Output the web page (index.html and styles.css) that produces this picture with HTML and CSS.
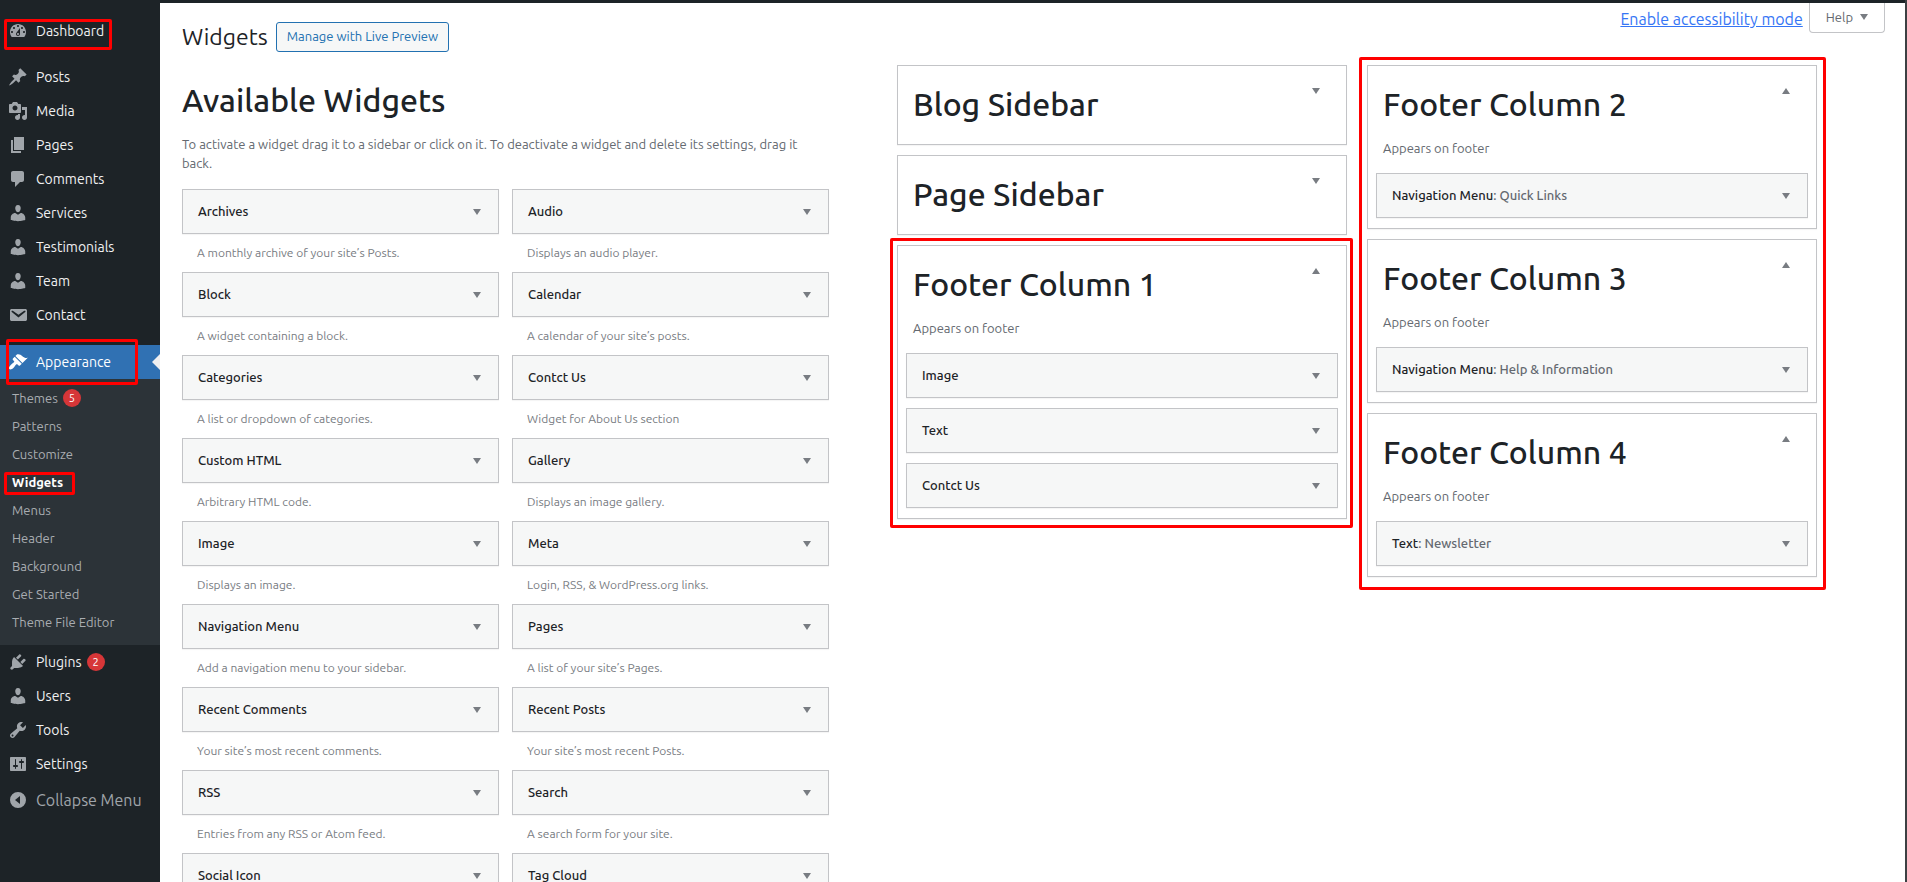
FILE: index.html
```html
<!DOCTYPE html>
<html lang="en">
<head>
    <meta charset="UTF-8">
    <meta name="viewport" content="width=device-width, initial-scale=1.0">
    <title>Widgets</title>
    <link rel="stylesheet" href="styles.css">
</head>
<body>
    <!-- Icons -->
    <svg class="sprite" aria-hidden="true">
        <symbol id="i-dashboard" viewBox="0 0 20 20"><path d="M3.76 16h12.48c1.1-1.37 1.76-3.11 1.76-5 0-4.42-3.58-8-8-8s-8 3.58-8 8c0 1.89.66 3.63 1.76 5zM10 4c.55 0 1 .45 1 1s-.45 1-1 1-1-.45-1-1 .45-1 1-1zM6 6c.55 0 1 .45 1 1s-.45 1-1 1-1-.45-1-1 .45-1 1-1zm8 0c.55 0 1 .45 1 1s-.45 1-1 1-1-.45-1-1 .45-1 1-1zm-5.37 5.55L12 7v6c0 1.1-.9 2-2 2s-2-.9-2-2c0-.57.24-1.08.63-1.45zM4 10c.55 0 1 .45 1 1s-.45 1-1 1-1-.45-1-1 .45-1 1-1zm12 0c.55 0 1 .45 1 1s-.45 1-1 1-1-.45-1-1 .45-1 1-1zm-5 3c0-.55-.45-1-1-1s-1 .45-1 1 .45 1 1 1 1-.45 1-1z"/></symbol>
        <symbol id="i-post" viewBox="0 0 20 20"><path d="M10.44 3.02l1.82-1.82 6.36 6.35-1.83 1.82c-1.05-.68-2.48-.57-3.41.36l-.75.75c-.92.93-1.04 2.35-.35 3.41l-1.83 1.82-2.41-2.41-2.8 2.79c-.42.42-3.38 2.71-3.8 2.29s1.86-3.39 2.28-3.81l2.79-2.79L4.1 9.36l1.83-1.82c1.05.69 2.48.57 3.4-.36l.75-.75c.93-.92 1.05-2.35.36-3.41z"/></symbol>
        <symbol id="i-media" viewBox="0 0 20 20"><path d="M13 11V4c0-.55-.45-1-1-1h-1.67L9 1H5L3.67 3H2c-.55 0-1 .45-1 1v7c0 .55.45 1 1 1h10c.55 0 1-.45 1-1zM7 4.5c1.38 0 2.5 1.12 2.5 2.5S8.38 9.5 7 9.5 4.5 8.38 4.5 7 5.62 4.5 7 4.5zM14 6h5v10.5c0 1.38-1.12 2.5-2.5 2.5S14 17.88 14 16.5s1.12-2.5 2.5-2.5c.17 0 .34.02.5.05V9h-3V6zm-4 8.05V13h2v3.5c0 1.38-1.12 2.5-2.5 2.5S7 17.88 7 16.5 8.12 14 9.5 14c.17 0 .34.02.5.05z"/></symbol>
        <symbol id="i-page" viewBox="0 0 20 20"><path d="M6 15V2h10v13H6zm-1 1h8v2H3V5h2v11z"/></symbol>
        <symbol id="i-comments" viewBox="0 0 20 20"><path d="M5 2h9c1.1 0 2 .9 2 2v7c0 1.1-.9 2-2 2h-2l-5 5v-5H5c-1.1 0-2-.9-2-2V4c0-1.1.9-2 2-2z"/></symbol>
        <symbol id="i-user" viewBox="0 0 20 20"><path d="M10 9.25c-2.27 0-2.73-3.44-2.73-3.44C7 4.02 7.82 2 9.97 2c2.16 0 2.98 2.02 2.71 3.81 0 0-.41 3.44-2.68 3.44zm0 2.57L12.72 10c2.39 0 4.52 2.33 4.52 4.53v2.49s-3.65 1.13-7.24 1.13c-3.65 0-7.24-1.13-7.24-1.13v-2.49c0-2.25 1.94-4.48 4.47-4.48z"/></symbol>
        <symbol id="i-email" viewBox="0 0 20 20"><path d="M3.87 4h13.25C18.37 4 19 4.59 19 5.79v8.42c0 1.19-.63 1.79-1.88 1.79H3.87c-1.25 0-1.88-.6-1.88-1.79V5.79c0-1.2.63-1.79 1.88-1.79zm6.62 8.6l6.74-5.53c.24-.2.43-.66.13-1.07-.29-.41-.82-.42-1.17-.17l-5.7 3.86L4.8 5.83c-.35-.25-.88-.24-1.17.17-.3.41-.11.87.13 1.07z"/></symbol>
        <symbol id="i-appearance" viewBox="0 0 20 20"><path d="M14.48 11.06L7.41 3.99l1.5-1.5c.5-.56 2.3-.47 3.51.32 1.21.8 1.43 1.28 2.91 2.1 1.18.64 2.45 1.26 4.45.85zm-.71.71L6.7 4.7 4.93 6.47c-.39.39-.39 1.02 0 1.41l1.06 1.06c.39.39.39 1.03 0 1.42-.6.6-1.43 1.11-2.21 1.69-.35.26-.7.53-1.01.84C1.43 14.23.4 16.08 1.4 17.07c.99 1 2.84-.03 4.18-1.36.31-.31.58-.66.85-1.02.57-.78 1.08-1.61 1.69-2.21.39-.39 1.02-.39 1.41 0l1.06 1.06c.39.39 1.02.39 1.41 0z"/></symbol>
        <symbol id="i-plugins" viewBox="0 0 20 20"><path d="M13.11 4.36L9.87 7.6 8 5.73l3.24-3.24c.35-.34 1.05-.2 1.56.32.52.51.66 1.21.31 1.55zm-8 1.77l.91-1.12 9.01 9.01-1.19.84c-.71.71-2.63 1.16-3.82 1.16H6.14L4.9 17.26c-.59.59-1.54.59-2.12 0-.59-.58-.59-1.53 0-2.12l1.24-1.24v-3.88c0-1.13.4-3.19 1.09-3.89zm7.26 3.97l3.24-3.24c.34-.35 1.04-.21 1.55.31.52.51.66 1.21.31 1.55l-3.24 3.25z"/></symbol>
        <symbol id="i-tools" viewBox="0 0 20 20"><path d="M16.68 9.77c-1.34 1.34-3.3 1.67-4.95.99l-5.41 6.52c-.99.99-2.59.99-3.58 0s-.99-2.59 0-3.57l6.52-5.42c-.68-1.65-.35-3.61.99-4.95 1.28-1.28 3.12-1.62 4.72-1.06l-2.89 2.89 2.82 2.82 2.86-2.87c.53 1.58.18 3.39-1.08 4.65zM3.81 16.21c.4.39 1.04.39 1.43 0 .4-.4.4-1.04 0-1.43-.39-.4-1.03-.4-1.43 0-.39.39-.39 1.03 0 1.43z"/></symbol>
        <symbol id="i-settings" viewBox="0 0 20 20"><path d="M18 16V4c0-.55-.45-1-1-1H3c-.55 0-1 .45-1 1v12c0 .55.45 1 1 1h14c.55 0 1-.45 1-1zM8 11h1c.55 0 1 .45 1 1s-.45 1-1 1H8v1.5c0 .28-.22.5-.5.5s-.5-.22-.5-.5V13H6c-.55 0-1-.45-1-1s.45-1 1-1h1V5.5c0-.28.22-.5.5-.5s.5.22.5.5V11zm5-2h-1c-.55 0-1-.45-1-1s.45-1 1-1h1V5.5c0-.28.22-.5.5-.5s.5.22.5.5V7h1c.55 0 1 .45 1 1s-.45 1-1 1h-1v5.5c0 .28-.22.5-.5.5s-.5-.22-.5-.5V9z"/></symbol>
        <symbol id="i-collapse" viewBox="0 0 20 20"><path fill-rule="evenodd" d="M10 2a8 8 0 1 0 0 16 8 8 0 0 0 0-16zM12 6v8l-5-4z"/></symbol>
        <symbol id="i-down" viewBox="0 0 8 6"><path d="M0 0h8L4 6z"/></symbol>
        <symbol id="i-up" viewBox="0 0 8 6"><path d="M0 6h8L4 0z"/></symbol>
    </svg>

    <div class="topbar"></div>

    <div class="layout">
        <!-- Admin menu -->
        <nav class="menu">
            <a href="#" class="menu-item marked mark-dashboard"><svg class="icon"><use href="#i-dashboard"/></svg>Dashboard</a>

            <div class="menu-group">
                <a href="#" class="menu-item"><svg class="icon"><use href="#i-post"/></svg>Posts</a>
                <a href="#" class="menu-item"><svg class="icon"><use href="#i-media"/></svg>Media</a>
                <a href="#" class="menu-item"><svg class="icon"><use href="#i-page"/></svg>Pages</a>
                <a href="#" class="menu-item"><svg class="icon"><use href="#i-comments"/></svg>Comments</a>
                <a href="#" class="menu-item"><svg class="icon"><use href="#i-user"/></svg>Services</a>
                <a href="#" class="menu-item"><svg class="icon"><use href="#i-user"/></svg>Testimonials</a>
                <a href="#" class="menu-item"><svg class="icon"><use href="#i-user"/></svg>Team</a>
                <a href="#" class="menu-item"><svg class="icon"><use href="#i-email"/></svg>Contact</a>
            </div>

            <a href="#" class="menu-item current marked mark-appearance"><svg class="icon"><use href="#i-appearance"/></svg>Appearance</a>
            <div class="submenu">
                <a href="#">Themes <span class="badge">5</span></a>
                <a href="#">Patterns</a>
                <a href="#">Customize</a>
                <a href="#" class="active marked mark-widgets">Widgets</a>
                <a href="#">Menus</a>
                <a href="#">Header</a>
                <a href="#">Background</a>
                <a href="#">Get Started</a>
                <a href="#">Theme File Editor</a>
            </div>

            <a href="#" class="menu-item"><svg class="icon"><use href="#i-plugins"/></svg>Plugins <span class="badge">2</span></a>
            <a href="#" class="menu-item"><svg class="icon"><use href="#i-user"/></svg>Users</a>
            <a href="#" class="menu-item"><svg class="icon"><use href="#i-tools"/></svg>Tools</a>
            <a href="#" class="menu-item"><svg class="icon"><use href="#i-settings"/></svg>Settings</a>
            <button type="button" class="collapse"><svg class="icon"><use href="#i-collapse"/></svg>Collapse Menu</button>
        </nav>

        <main class="content">
            <header class="page-header">
                <div class="page-title">
                    <h1>Widgets</h1>
                    <a href="#" class="title-action">Manage with Live Preview</a>
                </div>
                <div class="screen-meta">
                    <a href="#" class="access-link">Enable accessibility mode</a>
                    <button type="button" class="help">Help <svg class="arrow"><use href="#i-down"/></svg></button>
                </div>
            </header>

            <div class="columns">
                <!-- Available widgets -->
                <section class="available">
                    <h2>Available Widgets</h2>
                    <p class="intro">To activate a widget drag it to a sidebar or click on it. To deactivate a widget and delete its settings, drag it back.</p>

                    <div class="widget-list">
                        <div>
                            <div class="widget"><h3>Archives</h3><button type="button" class="toggle" aria-label="Add: Archives"><svg class="arrow"><use href="#i-down"/></svg></button></div>
                            <p class="desc">A monthly archive of your site’s Posts.</p>
                        </div>
                        <div>
                            <div class="widget"><h3>Audio</h3><button type="button" class="toggle" aria-label="Add: Audio"><svg class="arrow"><use href="#i-down"/></svg></button></div>
                            <p class="desc">Displays an audio player.</p>
                        </div>
                        <div>
                            <div class="widget"><h3>Block</h3><button type="button" class="toggle" aria-label="Add: Block"><svg class="arrow"><use href="#i-down"/></svg></button></div>
                            <p class="desc">A widget containing a block.</p>
                        </div>
                        <div>
                            <div class="widget"><h3>Calendar</h3><button type="button" class="toggle" aria-label="Add: Calendar"><svg class="arrow"><use href="#i-down"/></svg></button></div>
                            <p class="desc">A calendar of your site’s posts.</p>
                        </div>
                        <div>
                            <div class="widget"><h3>Categories</h3><button type="button" class="toggle" aria-label="Add: Categories"><svg class="arrow"><use href="#i-down"/></svg></button></div>
                            <p class="desc">A list or dropdown of categories.</p>
                        </div>
                        <div>
                            <div class="widget"><h3>Contct Us</h3><button type="button" class="toggle" aria-label="Add: Contct Us"><svg class="arrow"><use href="#i-down"/></svg></button></div>
                            <p class="desc">Widget for About Us section</p>
                        </div>
                        <div>
                            <div class="widget"><h3>Custom HTML</h3><button type="button" class="toggle" aria-label="Add: Custom HTML"><svg class="arrow"><use href="#i-down"/></svg></button></div>
                            <p class="desc">Arbitrary HTML code.</p>
                        </div>
                        <div>
                            <div class="widget"><h3>Gallery</h3><button type="button" class="toggle" aria-label="Add: Gallery"><svg class="arrow"><use href="#i-down"/></svg></button></div>
                            <p class="desc">Displays an image gallery.</p>
                        </div>
                        <div>
                            <div class="widget"><h3>Image</h3><button type="button" class="toggle" aria-label="Add: Image"><svg class="arrow"><use href="#i-down"/></svg></button></div>
                            <p class="desc">Displays an image.</p>
                        </div>
                        <div>
                            <div class="widget"><h3>Meta</h3><button type="button" class="toggle" aria-label="Add: Meta"><svg class="arrow"><use href="#i-down"/></svg></button></div>
                            <p class="desc">Login, RSS, &amp; WordPress.org links.</p>
                        </div>
                        <div>
                            <div class="widget"><h3>Navigation Menu</h3><button type="button" class="toggle" aria-label="Add: Navigation Menu"><svg class="arrow"><use href="#i-down"/></svg></button></div>
                            <p class="desc">Add a navigation menu to your sidebar.</p>
                        </div>
                        <div>
                            <div class="widget"><h3>Pages</h3><button type="button" class="toggle" aria-label="Add: Pages"><svg class="arrow"><use href="#i-down"/></svg></button></div>
                            <p class="desc">A list of your site’s Pages.</p>
                        </div>
                        <div>
                            <div class="widget"><h3>Recent Comments</h3><button type="button" class="toggle" aria-label="Add: Recent Comments"><svg class="arrow"><use href="#i-down"/></svg></button></div>
                            <p class="desc">Your site’s most recent comments.</p>
                        </div>
                        <div>
                            <div class="widget"><h3>Recent Posts</h3><button type="button" class="toggle" aria-label="Add: Recent Posts"><svg class="arrow"><use href="#i-down"/></svg></button></div>
                            <p class="desc">Your site’s most recent Posts.</p>
                        </div>
                        <div>
                            <div class="widget"><h3>RSS</h3><button type="button" class="toggle" aria-label="Add: RSS"><svg class="arrow"><use href="#i-down"/></svg></button></div>
                            <p class="desc">Entries from any RSS or Atom feed.</p>
                        </div>
                        <div>
                            <div class="widget"><h3>Search</h3><button type="button" class="toggle" aria-label="Add: Search"><svg class="arrow"><use href="#i-down"/></svg></button></div>
                            <p class="desc">A search form for your site.</p>
                        </div>
                        <div>
                            <div class="widget"><h3>Social Icon</h3><button type="button" class="toggle" aria-label="Add: Social Icon"><svg class="arrow"><use href="#i-down"/></svg></button></div>
                        </div>
                        <div>
                            <div class="widget"><h3>Tag Cloud</h3><button type="button" class="toggle" aria-label="Add: Tag Cloud"><svg class="arrow"><use href="#i-down"/></svg></button></div>
                        </div>
                    </div>
                </section>

                <!-- Sidebars -->
                <section class="sidebars">
                    <div class="sidebar-col">
                        <div class="sidebar">
                            <div class="sidebar-header"><h2>Blog Sidebar</h2><button type="button" class="toggle" aria-label="Blog Sidebar"><svg class="arrow"><use href="#i-down"/></svg></button></div>
                        </div>
                        <div class="sidebar">
                            <div class="sidebar-header"><h2>Page Sidebar</h2><button type="button" class="toggle" aria-label="Page Sidebar"><svg class="arrow"><use href="#i-down"/></svg></button></div>
                        </div>
                        <div class="sidebar open marked mark-column">
                            <div class="sidebar-header"><h2>Footer Column 1</h2><button type="button" class="toggle" aria-label="Footer Column 1"><svg class="arrow"><use href="#i-up"/></svg></button></div>
                            <p class="sidebar-desc">Appears on footer</p>
                            <div class="sidebar-widgets">
                                <div class="widget"><h3>Image</h3><button type="button" class="toggle" aria-label="Edit: Image"><svg class="arrow"><use href="#i-down"/></svg></button></div>
                                <div class="widget"><h3>Text</h3><button type="button" class="toggle" aria-label="Edit: Text"><svg class="arrow"><use href="#i-down"/></svg></button></div>
                                <div class="widget"><h3>Contct Us</h3><button type="button" class="toggle" aria-label="Edit: Contct Us"><svg class="arrow"><use href="#i-down"/></svg></button></div>
                            </div>
                        </div>
                    </div>

                    <div class="sidebar-col marked mark-columns">
                        <div class="sidebar open">
                            <div class="sidebar-header"><h2>Footer Column 2</h2><button type="button" class="toggle" aria-label="Footer Column 2"><svg class="arrow"><use href="#i-up"/></svg></button></div>
                            <p class="sidebar-desc">Appears on footer</p>
                            <div class="sidebar-widgets">
                                <div class="widget"><h3>Navigation Menu<span>: Quick Links</span></h3><button type="button" class="toggle" aria-label="Edit: Quick Links"><svg class="arrow"><use href="#i-down"/></svg></button></div>
                            </div>
                        </div>
                        <div class="sidebar open">
                            <div class="sidebar-header"><h2>Footer Column 3</h2><button type="button" class="toggle" aria-label="Footer Column 3"><svg class="arrow"><use href="#i-up"/></svg></button></div>
                            <p class="sidebar-desc">Appears on footer</p>
                            <div class="sidebar-widgets">
                                <div class="widget"><h3>Navigation Menu<span>: Help &amp; Information</span></h3><button type="button" class="toggle" aria-label="Edit: Help and Information"><svg class="arrow"><use href="#i-down"/></svg></button></div>
                            </div>
                        </div>
                        <div class="sidebar open">
                            <div class="sidebar-header"><h2>Footer Column 4</h2><button type="button" class="toggle" aria-label="Footer Column 4"><svg class="arrow"><use href="#i-up"/></svg></button></div>
                            <p class="sidebar-desc">Appears on footer</p>
                            <div class="sidebar-widgets">
                                <div class="widget"><h3>Text<span>: Newsletter</span></h3><button type="button" class="toggle" aria-label="Edit: Newsletter"><svg class="arrow"><use href="#i-down"/></svg></button></div>
                            </div>
                        </div>
                    </div>
                </section>
            </div>
        </main>
    </div>
</body>
</html>
```
FILE: styles.css
```css
* {
    box-sizing: border-box;
}

body {
    display: flex;
    flex-direction: column;
    height: 100vh;
    margin: 0;
    overflow: hidden;
    border-right: 2px solid #3c4043;
    background: #ffffff;
    color: #1d2327;
    font-family: Ubuntu, "Open Sans", "Noto Sans", sans-serif;
    font-size: 13px;
    line-height: 19px;
}

h1, h2, h3, p {
    margin: 0;
    font-weight: 400;
}

a {
    text-decoration: none;
}

button {
    border: none;
    background: none;
    font-family: inherit;
    cursor: pointer;
}

.sprite {
    display: none;
}

.topbar {
    flex: none;
    height: 3px;
    background: #1d2327;
}

.layout {
    display: flex;
    flex: 1;
    min-height: 0;
}

/* Admin menu */
.menu {
    flex: none;
    width: 160px;
    padding-top: 11px;
    background: #1d2327;
}

.menu-group {
    margin: 12px 0 13px;
}

.menu-item {
    display: flex;
    align-items: center;
    height: 34px;
    padding-left: 8px;
    color: #f0f0f1;
    font-size: 14px;
    line-height: 18px;
}

.icon {
    flex: none;
    width: 20px;
    height: 20px;
    margin-right: 8px;
    fill: #a0a5aa;
}

.current {
    background: #3071b3;
    color: #ffffff;
}

.current .icon {
    fill: #ffffff;
}

.current::before {
    content: "";
    position: absolute;
    top: 9px;
    right: 0;
    border: 8px solid transparent;
    border-left: none;
    border-right-color: #f0f0f1;
}

.submenu {
    padding: 5px 0 9px;
    background: #2c3338;
}

.submenu a {
    display: flex;
    align-items: center;
    height: 28px;
    padding-left: 12px;
    color: #a9adb1;
}

.submenu .active {
    color: #ffffff;
    font-weight: 600;
}

.badge {
    width: 18px;
    height: 18px;
    margin-left: 5px;
    border-radius: 50%;
    background: #d63638;
    color: #ffffff;
    font-size: 11px;
    line-height: 18px;
    text-align: center;
}

.collapse {
    display: flex;
    align-items: center;
    height: 38px;
    padding: 0 0 0 8px;
    color: #a0a5aa;
    font-size: 16px;
}

/* Page header */
.content {
    flex: 1;
    min-width: 0;
    padding-left: 22px;
}

.page-header {
    display: flex;
    justify-content: space-between;
    align-items: flex-start;
    height: 62px;
    padding-right: 20px;
}

.page-title {
    display: flex;
    align-items: center;
    gap: 8px;
    padding-top: 19px;
}

.page-title h1 {
    font-size: 23px;
    line-height: 28px;
}

.title-action {
    padding: 0 10px 2px;
    border: 1px solid #2271b1;
    border-radius: 3px;
    background: #f6f7f7;
    color: #2271b1;
    line-height: 26px;
}

.screen-meta {
    display: flex;
    gap: 6px;
}

.access-link {
    color: #3575f5;
    font-size: 16px;
    line-height: 32px;
    text-decoration: underline;
}

.help {
    display: flex;
    align-items: center;
    gap: 7px;
    height: 30px;
    padding: 0 16px 2px;
    border: 1px solid #c3c4c7;
    border-top: none;
    border-radius: 0 0 4px 4px;
    color: #646970;
    font-size: 13px;
}

.arrow {
    display: block;
    width: 8px;
    height: 6px;
    fill: #787c82;
}

/* Available widgets */
.columns {
    display: grid;
    grid-template-columns: 647fr 920fr;
    gap: 68px;
    padding-right: 88px;
}

h2 {
    font-size: 32px;
    font-weight: 500;
    line-height: 40px;
}

.available h2 {
    margin: 15px 0;
}

.intro {
    margin-bottom: 16px;
    color: #646970;
}

.widget-list {
    display: grid;
    grid-template-columns: 1fr 1fr;
    column-gap: 13px;
}

.widget {
    display: flex;
    justify-content: space-between;
    align-items: center;
    height: 45px;
    padding: 0 12px 0 15px;
    border: 1px solid #c3c4c7;
    background: #f6f7f7;
    box-shadow: 0 1px 1px rgba(0, 0, 0, 0.04);
}

.widget h3 {
    font-size: 13px;
    font-weight: 500;
}

.widget h3 span {
    color: #646970;
}

.toggle {
    padding: 5px;
}

.desc {
    padding: 10px 15px;
    color: #787c82;
    font-size: 12px;
    line-height: 18px;
}

/* Sidebars */
.sidebars {
    display: grid;
    grid-template-columns: 1fr 1fr;
    gap: 20px;
    align-items: start;
}

.sidebar-col {
    display: grid;
    gap: 10px;
}

.sidebar {
    padding-bottom: 5px;
    border: 1px solid #c3c4c7;
    background: #ffffff;
    box-shadow: 0 1px 1px rgba(0, 0, 0, 0.04);
}

.sidebar.open {
    padding-bottom: 10px;
}

.sidebar-header {
    display: flex;
    justify-content: space-between;
    align-items: flex-start;
    padding: 18px 21px 15px 15px;
}

.sidebar-desc {
    padding: 0 15px 15px;
    color: #646970;
}

.sidebar-header .toggle {
    padding-top: 4px;
}

.sidebar-widgets {
    display: grid;
    gap: 10px;
    padding: 0 8px;
}

/* Red markers over the steps to follow */
.marked {
    position: relative;
}

.marked::after {
    content: "";
    position: absolute;
    z-index: 1;
    border: 3px solid #ff0000;
    border-radius: 2px;
    pointer-events: none;
}

.mark-dashboard::after {
    inset: 5px 48px -2px 4px;
}

.mark-appearance::after {
    inset: -6px 22px -6px 6px;
}

.mark-widgets::after {
    inset: 4px 85px 1px 4px;
}

.mark-column::after {
    inset: -8px -7px -10px -8px;
}

.mark-columns::after {
    inset: -8px -9px -13px -8px;
}
```
